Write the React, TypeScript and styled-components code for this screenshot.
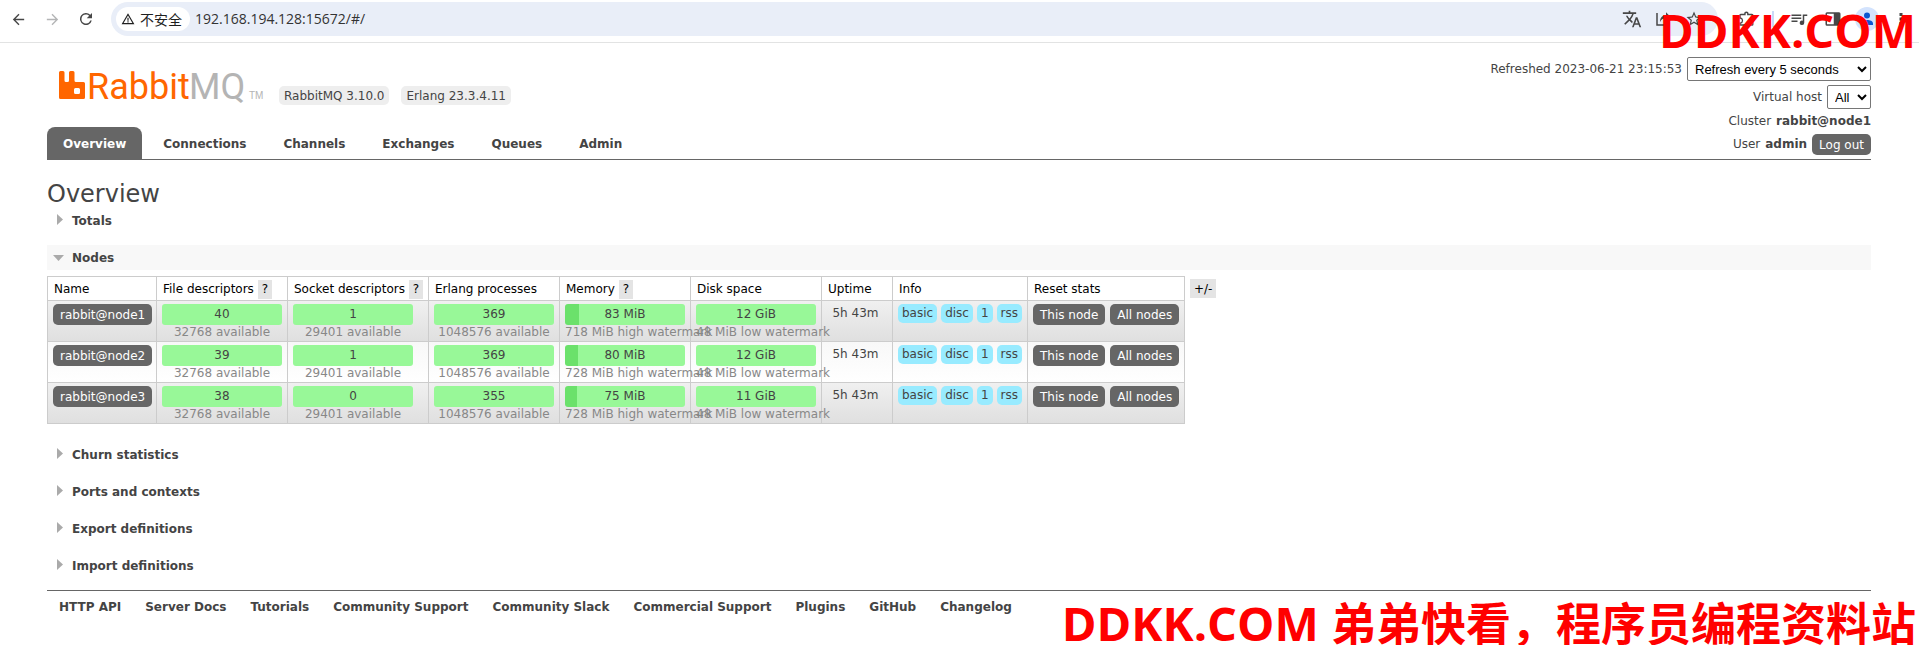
import React from "react";
import styled, { createGlobalStyle } from "styled-components";

const Global = createGlobalStyle`
  * { box-sizing: border-box; }
  body { margin: 0; background: #fff; color: #444; font: 12px/17px Verdana, "DejaVu Sans", sans-serif; }
  a { color: #444; font-weight: bold; text-decoration: none; }
  button { font: inherit; border: 0; }
`;

const Page = styled.div`
  position: relative;
  min-height: 100vh;
  overflow: hidden;
`;

const Browser = styled.header`
  display: flex;
  align-items: center;
  height: 43px;
  padding: 0 1px 4px;
  border-bottom: 1px solid #e2e3e3;
`;

const ToolButton = styled.button<{ $dim?: boolean; $narrow?: boolean }>`
  display: flex;
  align-items: center;
  justify-content: center;
  width: ${(p) => (p.$narrow ? "31px" : "34px")};
  height: 34px;
  padding: 0;
  background: none;
  color: ${(p) => (p.$dim ? "#b4b5b6" : "#474747")};
`;

const AddressBar = styled.div`
  display: flex;
  align-items: center;
  flex: 1;
  height: 34px;
  margin: 0 11px 0 8px;
  padding: 0 9px 0 5px;
  border-radius: 17px;
  background: #e9eef8;
`;

const Security = styled.button`
  display: flex;
  align-items: center;
  gap: 5px;
  height: 24px;
  padding: 0 8px 0 5px;
  border-radius: 12px;
  background: #fff;
  color: #1f1f1f;
  font: 14px/20px "Noto Sans CJK SC", sans-serif;
`;

const Address = styled.input`
  flex: 1;
  min-width: 0;
  padding: 0 5px;
  border: 0;
  outline: 0;
  background: none;
  color: #333;
  font: 14px/20px "Open Sans", sans-serif;
`;

const Divider = styled.span`
  width: 2px;
  height: 16px;
  margin: 0 8px 0 9px;
  background: #c9daf8;
`;

const Outer = styled.div`
  padding: 0 48px 0 47px;
`;

const Head = styled.div`
  display: flex;
  justify-content: space-between;
  border-bottom: 1px solid #666;
`;

const Brand = styled.div`
  display: flex;
  align-items: flex-end;
  gap: 12px;
  height: 62px;
  padding: 0 0 0 12px;
`;

const Version = styled.span`
  padding: 2px 5px 0;
  border-radius: 5px;
  background: #eee;
`;

const Nav = styled.nav`
  display: flex;
  gap: 5px;
  margin-top: 22px;
`;

const Tab = styled.a<{ $on?: boolean }>`
  padding: 9px 16px 7px;
  border-radius: 8px 8px 0 0;
  line-height: 16px;
  background: ${(p) => (p.$on ? "#666" : "none")};
  color: ${(p) => (p.$on ? "#fff" : "#444")};
`;

const Status = styled.div`
  display: flex;
  flex-direction: column;
  align-items: flex-end;
  gap: 4px;
  padding-top: 14px;
`;

const StatusLine = styled.div`
  display: flex;
  align-items: center;
  gap: 5px;
  line-height: 17px;
`;

const Select = styled.select`
  height: 24px;
  padding: 0 3px;
  border: 1px solid #767676;
  border-radius: 2px;
  background: #fff;
  color: #000;
  font: 13px "Liberation Sans", sans-serif;
`;

const RefreshSelect = styled(Select)`
  width: 184px;
`;

const HostSelect = styled(Select)`
  width: 44px;
`;

const DarkButton = styled.button`
  padding: 3px 7px 1px;
  border-radius: 5px;
  background: #666;
  color: #fff;
  white-space: nowrap;
`;

const Title = styled.h1`
  margin: 20px 0 0;
  font-size: 24px;
  line-height: 28px;
  font-weight: normal;
`;

const SectionHead = styled.h2<{ $open?: boolean }>`
  display: flex;
  margin: 0 0 12px;
  font-size: 12px;
  line-height: 17px;
  background: ${(p) => (p.$open ? "#f8f8f8" : "none")};
`;

const Toggle = styled.button`
  display: flex;
  align-items: center;
  gap: 7px;
  padding: 5px 5px 3px;
  background: none;
  color: #444;
  font-weight: bold;
`;

const TableRow = styled.div`
  display: flex;
  align-items: flex-start;
  gap: 5px;
  margin: -6px 0 18px;
`;

const Table = styled.table`
  border-collapse: collapse;
  table-layout: fixed;
  width: 1138px;
  th, td { border: 1px solid #ccc; text-align: left; white-space: nowrap; }
  th { height: 24px; padding: 3px 0 1px 6px; color: #000; font-weight: normal; }
  td { height: 41px; padding: 3px 0 0 5px; vertical-align: top; }
  tbody tr:nth-child(odd) { background: linear-gradient(#f0f0f0, #dfdfdf); }
  tbody tr:nth-child(even) { background: linear-gradient(#f8f8f8, #fff); }
`;

const Column = styled.col<{ $w: number }>`
  width: ${(p) => p.$w}px;
`;

const Help = styled.button`
  padding: 1px 4px;
  background: #e4e4e4;
  color: #000;
`;

const PlusMinus = styled(Help)`
  margin-top: 3px;
  padding: 2px 4px 0;
`;

const Meter = styled.div`
  width: 120px;
  text-align: center;
`;

const Bar = styled.div`
  height: 21px;
  border-radius: 3px;
  line-height: 21px;
`;

const Note = styled.div`
  display: flex;
  justify-content: center;
  min-width: max-content;
  width: 100%;
  line-height: 15px;
  color: #888;
`;

const Uptime = styled.div`
  padding: 1px 8px 0 0;
  text-align: center;
`;

const Tags = styled.div<{ $buttons?: boolean }>`
  display: flex;
  gap: ${(p) => (p.$buttons ? "5px" : "4px")};
`;

const Tag = styled.span`
  padding: 1px 4px;
  border-radius: 5px;
  background: #98ebff;
`;

const Footer = styled.footer`
  display: flex;
  gap: 24px;
  padding: 8px 12px;
  border-top: 1px solid #666;
`;

const Mark = styled.div<{ $bottom?: boolean }>`
  position: absolute;
  right: 3px;
  ${(p) => (p.$bottom ? "bottom: -7px" : "top: 1px")};
  color: #f00;
  font: bold 47px/58px "Open Sans", sans-serif;
  white-space: nowrap;
  pointer-events: none;
`;

const Chinese = styled.span`
  font: bold 45px/58px "Noto Sans CJK SC", sans-serif;
`;

const Icon = ({ d, size = 20 }: { d: string; size?: number }) => (
  <svg width={size} height={size} viewBox="0 0 24 24" fill="currentColor" aria-hidden="true">
    <path fillRule="evenodd" d={d} />
  </svg>
);

const icons = {
  back: "M20 11H7.800l5.600-5.600L12 4l-8 8 8 8 1.400-1.400L7.800 13H20z",
  forward: "M4 11h12.200l-5.600-5.600L12 4l8 8-8 8-1.400-1.400 5.600-5.600H4z",
  reload: "M17.650 6.350A8 8 0 1 0 19.730 14h-2.080A6 6 0 1 1 12 6c1.660 0 3.140.690 4.220 1.780L13 11h7V4z",
  warning: "M1 21h22L12 2zm3.500-2L12 6l7.500 13zM11 16h2v2h-2zM11 10h2v5h-2z",
  translate:
    "M12.870 15.070l-2.540-2.510.030-.030A17.500 17.500 0 0 0 14.070 6H17V4h-7V2H8v2H1v2h11.170C11.500 7.920 10.440 9.750 9 11.350 8.070 10.320 7.300 9.190 6.690 8h-2c.730 1.630 1.730 3.170 2.980 4.560l-5.090 5.020L4 19l5-5 3.110 3.110zM18.500 10h-2L12 22h2l1.120-3h4.750L21 22h2zm-2.620 7l1.620-4.330L19.120 17z",
  share: "M3 4h2v15h14v-5h2v7H3zM8 16c0-6 3-9 8-9V3l6 6-6 6v-4c-4 0-6 1-8 5z",
  star: "M22 9.240l-7.190-.620L12 2 9.190 8.630 2 9.240l5.460 4.730L5.820 21 12 17.270 18.180 21l-1.630-7.030zM12 15.400l-3.760 2.270 1-4.280-3.320-2.880 4.380-.380L12 6.100l1.710 4.040 4.380.380-3.320 2.880 1 4.280z",
  puzzle:
    "M20 5h-4.500a3 3 0 0 0-6 0H5a2 2 0 0 0-2 2v4.500h1a2.500 2.500 0 0 1 0 5H3V21h17a2 2 0 0 0 2-2V7a2 2 0 0 0-2-2zm0 14H5v-.700a4.500 4.500 0 0 0 0-8.600V7h6.500V5a1 1 0 0 1 2 0v2H20z",
  queue: "M15 6H2v2h13zm0 4H2v2h13zM2 16h8v-2H2zM17 6v8.180A3 3 0 1 0 19 17V8h4V6z",
  panel: "M4 3h16q2 0 2 2v14q0 2-2 2H4q-2 0-2-2V5q0-2 2-2zM4 5v14h9V5z",
  menu: "M10 4h4v4h-4zM10 10h4v4h-4zM10 16h4v4h-4z",
};

const Avatar = () => (
  <svg width="24" height="24" viewBox="0 0 24 24" aria-hidden="true">
    <circle cx="12" cy="12" r="12" fill="#d3e3fd" />
    <circle cx="12" cy="8.500" r="3" fill="#0b57d0" />
    <path d="M6 18v-1.500c0-2.500 3-3.500 6-3.500s6 1 6 3.500V18z" fill="#0b57d0" />
  </svg>
);

const Logo = () => (
  <svg width="208" height="34" viewBox="0 0 208 34" role="img" aria-label="RabbitMQ">
    <path
      fill="#f60"
      fillRule="evenodd"
      d="M1.500 0H4q1.500 0 1.500 1.500V9.500q0 1.500 1.500 1.500h1.500q1.500 0 1.500-1.500v-8Q10 0 11.500 0H14q1.500 0 1.500 1.500V9.500q0 1.500 1.500 1.500h7.500q1.500 0 1.500 1.500v14q0 1.500-1.500 1.500h-23Q0 28 0 26.500v-25Q0 0 1.500 0zM16.500 17q-1.500 0-1.500 1.500v3q0 1.500 1.500 1.500h3q1.500 0 1.500-1.500v-3q0-1.500-1.500-1.500z"
    />
    <g fontFamily="Roboto, sans-serif" fontSize="36">
      <text x="28" y="28" fill="#f60">Rabbit</text>
      <text x="130" y="28" fill="#b4b4b4">MQ</text>
    </g>
    <text x="190" y="28" fontFamily="'Liberation Sans', sans-serif" fontSize="10" fill="#b4b4b4">TM</text>
  </svg>
);

const tabs = ["Overview", "Connections", "Channels", "Exchanges", "Queues", "Admin"];

const columns = [
  { label: "Name", width: 109 },
  { label: "File descriptors", width: 131, help: true },
  { label: "Socket descriptors", width: 141, help: true },
  { label: "Erlang processes", width: 131 },
  { label: "Memory", width: 131, help: true },
  { label: "Disk space", width: 131 },
  { label: "Uptime", width: 71 },
  { label: "Info", width: 135 },
  { label: "Reset stats", width: 157 },
];

const nodes = [
  { name: "rabbit@node1", files: 40, sockets: 1, processes: 369, memory: 83, watermark: 718, fill: 14, disk: 12 },
  { name: "rabbit@node2", files: 39, sockets: 1, processes: 369, memory: 80, watermark: 728, fill: 13, disk: 12 },
  { name: "rabbit@node3", files: 38, sockets: 0, processes: 355, memory: 75, watermark: 728, fill: 12, disk: 11 },
];

const footerLinks = [
  "HTTP API",
  "Server Docs",
  "Tutorials",
  "Community Support",
  "Community Slack",
  "Commercial Support",
  "Plugins",
  "GitHub",
  "Changelog",
];

const Gauge = ({ value, note, fill = 0 }: { value: React.ReactNode; note: string; fill?: number }) => (
  <Meter>
    <Bar style={{ background: `linear-gradient(to right, #6be16b ${fill}px, #98f898 ${fill}px)` }}>{value}</Bar>
    <Note>{note}</Note>
  </Meter>
);

const Section = ({ title, open }: { title: string; open?: boolean }) => (
  <SectionHead $open={open}>
    <Toggle aria-expanded={!!open}>
      <svg width="13" height="17" fill="#aaa" aria-hidden="true">
        <path d={open ? "M1 5h11l-5.500 6z" : "M5 1v11l6-5.500z"} />
      </svg>
      {title}
    </Toggle>
  </SectionHead>
);

export default function App() {
  return (
    <Page>
      <Global />
      <Browser>
        <ToolButton aria-label="Back"><Icon size={17} d={icons.back} /></ToolButton>
        <ToolButton aria-label="Forward" $dim><Icon size={17} d={icons.forward} /></ToolButton>
        <ToolButton aria-label="Reload"><Icon size={18} d={icons.reload} /></ToolButton>
        <AddressBar>
          <Security><Icon size={14} d={icons.warning} />不安全</Security>
          <Address aria-label="Address" defaultValue="192.168.194.128:15672/#/" />
          <ToolButton $narrow aria-label="Translate"><Icon d={icons.translate} /></ToolButton>
          <ToolButton $narrow aria-label="Share"><Icon size={18} d={icons.share} /></ToolButton>
          <ToolButton $narrow aria-label="Bookmark"><Icon size={18} d={icons.star} /></ToolButton>
        </AddressBar>
        <ToolButton aria-label="Extensions"><Icon size={18} d={icons.puzzle} /></ToolButton>
        <Divider />
        <ToolButton aria-label="Media"><Icon size={18} d={icons.queue} /></ToolButton>
        <ToolButton aria-label="Side panel"><Icon size={18} d={icons.panel} /></ToolButton>
        <ToolButton aria-label="Profile"><Avatar /></ToolButton>
        <ToolButton aria-label="Menu"><Icon size={18} d={icons.menu} /></ToolButton>
      </Browser>
      <Outer>
        <Head>
          <div>
            <Brand>
              <Logo />
              <Version>RabbitMQ 3.10.0</Version>
              <Version>Erlang 23.3.4.11</Version>
            </Brand>
            <Nav>
              {tabs.map((t, i) => (
                <Tab key={t} href="#/" $on={i === 0}>{t}</Tab>
              ))}
            </Nav>
          </div>
          <Status>
            <StatusLine>
              <label htmlFor="refresh">Refreshed 2023-06-21 23:15:53</label>
              <RefreshSelect id="refresh"><option>Refresh every 5 seconds</option></RefreshSelect>
            </StatusLine>
            <StatusLine>
              <label htmlFor="vhost">Virtual host</label>
              <HostSelect id="vhost"><option>All</option></HostSelect>
            </StatusLine>
            <StatusLine>Cluster <b>rabbit@node1</b></StatusLine>
            <StatusLine>User <b>admin</b> <DarkButton>Log out</DarkButton></StatusLine>
          </Status>
        </Head>
        <Title>Overview</Title>
        <Section title="Totals" />
        <Section title="Nodes" open />
        <TableRow>
          <Table>
            <colgroup>{columns.map((c) => <Column key={c.label} $w={c.width} />)}</colgroup>
            <thead>
              <tr>
                {columns.map((c) => (
                  <th key={c.label}>{c.label} {c.help && <Help>?</Help>}</th>
                ))}
              </tr>
            </thead>
            <tbody>
              {nodes.map((n) => (
                <tr key={n.name}>
                  <td><DarkButton>{n.name}</DarkButton></td>
                  <td><Gauge value={n.files} note="32768 available" /></td>
                  <td><Gauge value={n.sockets} note="29401 available" /></td>
                  <td><Gauge value={n.processes} note="1048576 available" /></td>
                  <td><Gauge value={`${n.memory} MiB`} fill={n.fill} note={`${n.watermark} MiB high watermark`} /></td>
                  <td><Gauge value={`${n.disk} GiB`} note="48 MiB low watermark" /></td>
                  <td><Uptime>5h 43m</Uptime></td>
                  <td><Tags><Tag>basic</Tag><Tag>disc</Tag><Tag>1</Tag><Tag>rss</Tag></Tags></td>
                  <td><Tags $buttons><DarkButton>This node</DarkButton><DarkButton>All nodes</DarkButton></Tags></td>
                </tr>
              ))}
            </tbody>
          </Table>
          <PlusMinus>+/-</PlusMinus>
        </TableRow>
        <Section title="Churn statistics" />
        <Section title="Ports and contexts" />
        <Section title="Export definitions" />
        <Section title="Import definitions" />
        <Footer>{footerLinks.map((l) => <a key={l} href="#/">{l}</a>)}</Footer>
      </Outer>
      <Mark>DDKK.COM</Mark>
      <Mark $bottom lang="zh-CN">DDKK.COM <Chinese>弟弟快看，程序员编程资料站</Chinese></Mark>
    </Page>
  );
}
